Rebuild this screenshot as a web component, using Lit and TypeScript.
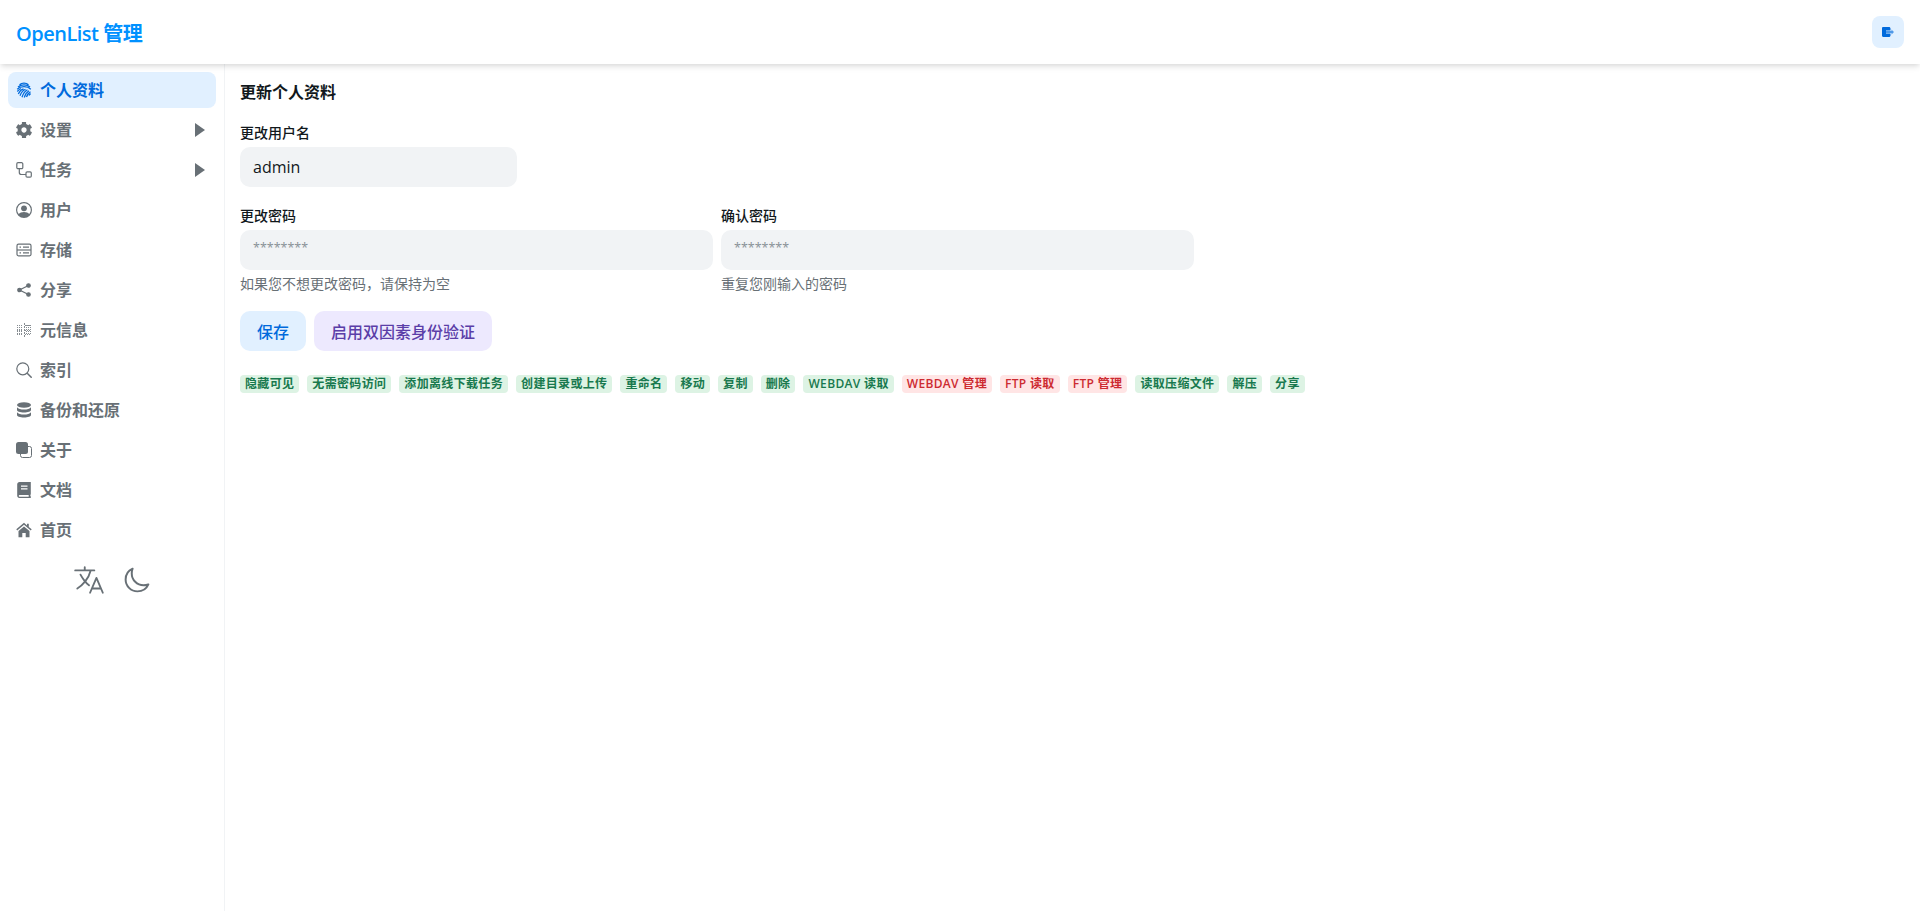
import { LitElement, html, css, svg } from "lit";
import { customElement } from "lit/decorators.js";

const icons: Record<string, unknown> = {
  finger: svg`<svg viewBox="0 0 16 16" fill="none" stroke="#006adc" stroke-width="1.250"><path d="M3.500 2.800C6 .6 10 .6 12.500 2.800M2 5C5 2.300 11 2.300 14 5M1.200 7.200C4.500 3.800 11.500 3.800 14.800 7.200"/><path d="M1.300 9.500C2.500 8 3.500 7 5 6.500M2.300 12C3.500 9.500 5 7.500 7.500 6.800M4 13.800C5 11 6.500 8.500 9.500 7.200M6 15.200C7 12 8.500 9.500 11.500 7.800M8.300 15.500C9 12.500 10.500 10.300 13 8.700M10.500 15C11 13 12.200 11.200 14.500 9.800M13 13.500C13.300 12.700 13.800 12.100 14.600 11.600"/></svg>`,
  gear: svg`<svg viewBox="17 14 478 484" fill="currentColor"><path d="M487.400 315.700l-42.600-24.600c4.300-23.200 4.300-47 0-70.200l42.600-24.600c4.900-2.800 7.100-8.600 5.500-14-11.100-35.600-30-67.800-54.700-94.600-3.800-4.100-10-5.100-14.800-2.300L380.800 110c-17.900-15.400-38.500-27.300-60.800-35.100V25.800c0-5.600-3.900-10.500-9.400-11.700-36.700-8.200-74.300-7.800-109.200 0-5.500 1.200-9.400 6.100-9.400 11.700V75c-22.200 7.900-42.800 19.800-60.800 35.100L88.700 85.500c-4.900-2.800-11-1.900-14.800 2.300-24.700 26.700-43.600 58.900-54.700 94.600-1.700 5.400.6 11.200 5.500 14L67.300 221c-4.300 23.200-4.300 47 0 70.200l-42.600 24.600c-4.900 2.800-7.100 8.600-5.500 14 11.100 35.600 30 67.800 54.700 94.600 3.800 4.100 10 5.100 14.800 2.300l42.600-24.600c17.900 15.400 38.500 27.300 60.800 35.100v49.200c0 5.600 3.900 10.500 9.400 11.700 36.700 8.200 74.300 7.800 109.200 0 5.500-1.200 9.400-6.100 9.400-11.700v-49.200c22.200-7.900 42.800-19.800 60.800-35.100l42.600 24.600c4.900 2.800 11 1.900 14.800-2.300 24.700-26.700 43.600-58.900 54.700-94.600 1.500-5.500-.7-11.300-5.600-14.100zM256 336c-44.100 0-80-35.900-80-80s35.900-80 80-80 80 35.900 80 80-35.900 80-80 80z"/></svg>`,
  route: svg`<svg viewBox="0 0 16 16" fill="none" stroke="currentColor" stroke-width="1.200"><rect x=".8" y=".7" width="6" height="6" rx="1.200"/><rect x="10" y="9.800" width="5.300" height="5.300" rx="1.200"/><path d="M3.300 6.700V10.500C3.300 12 4.300 12.500 5.500 12.500H10"/></svg>`,
  user: svg`<svg viewBox="0 0 16 16" fill="currentColor"><path fill-rule="evenodd" d="M8 0a8 8 0 1 0 0 16A8 8 0 0 0 8 0zm0 1.300a6.700 6.700 0 0 1 5.300 10.800C12.300 10.800 10.300 10 8 10s-4.300.8-5.300 2.100A6.700 6.700 0 0 1 8 1.300z"/><circle cx="8" cy="6.300" r="2.900"/></svg>`,
  storage: svg`<svg viewBox="0 0 16 16" fill="none" stroke="currentColor" stroke-width="1.200"><rect x="1" y="2.200" width="14" height="11.600" rx="1.500"/><path d="M1 8H15"/><path d="M3.500 5.200H5M3.500 10.900H5M7 5.200H13M7 10.900H13"/></svg>`,
  share: svg`<svg viewBox="0 0 16 16" fill="currentColor" stroke="currentColor" stroke-width="1.300"><circle cx="12.500" cy="3.500" r="1.700"/><circle cx="12.500" cy="12.500" r="1.700"/><circle cx="3.500" cy="8" r="1.700"/><path d="M12.500 3.500L3.500 8L12.500 12.500" fill="none"/></svg>`,
  meta: svg`<svg viewBox="0 0 16 16" fill="none" stroke="currentColor" stroke-width="1" opacity=".8" shape-rendering="crispEdges"><path stroke-dasharray="2 1" d="M8 .5V15.500"/><path stroke-dasharray="1 1" d="M1.500 3V13M3.500 3V13M5.500 3V13M10.500 3V13M12.500 3V13M14.500 3V13M1 3.500H7M9 3.500H15M1 8H7M9 8H15M1 12.500H7M9 12.500H15"/></svg>`,
  search: svg`<svg viewBox="0 0 16 16" fill="none" stroke="currentColor" stroke-width="1.200"><circle cx="6.800" cy="6.800" r="6"/><path d="M11.200 11.200L15.700 15.700" stroke-width="1.500"/></svg>`,
  db: svg`<svg viewBox="0 0 16 16" fill="currentColor"><ellipse cx="8" cy="3" rx="7" ry="2.800"/><path d="M1 5.200C2 7 5 7.500 8 7.500S14 7 15 5.200V8C15 9.500 12 10.500 8 10.500S1 9.500 1 8z"/><path d="M1 10.200C2 12 5 12.500 8 12.500S14 12 15 10.200V13C15 14.500 12 15.500 8 15.500S1 14.500 1 13z"/></svg>`,
  about: svg`<svg viewBox="0 0 16 16"><rect x="4.500" y="4.500" width="11" height="11" rx="2" fill="none" stroke="currentColor" stroke-width="1"/><rect x="0" y="0" width="12" height="12" rx="2.500" fill="currentColor"/></svg>`,
  book: svg`<svg viewBox="0 0 16 16" fill="currentColor"><path fill-rule="evenodd" d="M3.500 0H14.800V12.200C14.200 12.600 14.200 14 14.800 14.500V16H3.500C2 16 1.200 15 1.200 13.800V2.300C1.200 1 2.200 0 3.500 0zM5 3.500V4.800H11.500V3.500zM5 6.300V7.500H11.500V6.300zM3.500 13C2.500 13 2.500 14.800 3.500 14.800H12.800C12.500 14.200 12.500 13.600 12.800 13z"/></svg>`,
  home: svg`<svg viewBox="0 0 16 16" fill="currentColor"><path d="M8 4.500L2.500 9V15.200H6.300V11H9.700V15.200H13.500V9z"/><path d="M8 .8L.3 7.300 1.200 8.400 8 2.800 14.800 8.400 15.700 7.300 12.800 4.900V1.800H11V3.400z"/></svg>`,
  translate: svg`<svg viewBox="0 0 512 512" fill="none" stroke="currentColor" stroke-linecap="round" stroke-linejoin="round" stroke-width="28"><path d="M48 112h288M192 64v48M272 448l96-224 96 224M301.500 384h133M281.300 112S257 206 199 277 80 384 80 384"/><path d="M256 336s-35-27-72-75-56-85-56-85"/></svg>`,
  moon: svg`<svg viewBox="0 0 512 512" fill="none" stroke="currentColor" stroke-linecap="round" stroke-linejoin="round" stroke-width="36"><path d="M160 136c0-30.620 4.510-61.610 16-88C99.570 81.270 48 159.320 48 248c0 119.290 96.710 216 216 216 88.680 0 166.730-51.570 200-128-26.390 11.490-57.380 16-88 16-119.290 0-216-96.710-216-216z"/></svg>`,
  logout: svg`<svg viewBox="0 0 12 10"><path d="M0 1.200C0 .5.500 0 1.200 0H7C7.800 0 8.500.7 8.500 1.500V3.500H4V6.500H8.500V8.500C8.500 9.300 7.800 10 7 10H1.200C.5 10 0 9.500 0 8.800z" fill="currentColor"/><path d="M4 4H9.500V2.500L12 5L9.500 7.500V6H4z" fill="currentColor" opacity=".65"/></svg>`,
};

const menu: Array<[string, string, boolean?, boolean?]> = [
  ["finger", "个人资料", false, true],
  ["gear", "设置", true],
  ["route", "任务", true],
  ["user", "用户"],
  ["storage", "存储"],
  ["share", "分享"],
  ["meta", "元信息"],
  ["search", "索引"],
  ["db", "备份和还原"],
  ["about", "关于"],
  ["book", "文档"],
  ["home", "首页"],
];

const tags: Array<[string, boolean?]> = [
  ["隐藏可见"],
  ["无需密码访问"],
  ["添加离线下载任务"],
  ["创建目录或上传"],
  ["重命名"],
  ["移动"],
  ["复制"],
  ["删除"],
  ["WEBDAV 读取"],
  ["WEBDAV 管理", true],
  ["FTP 读取", true],
  ["FTP 管理", true],
  ["读取压缩文件"],
  ["解压"],
  ["分享"],
];

@customElement("app-root")
export class AppRoot extends LitElement {
  static styles = css`
    :host {
      display: block;
      height: 911px;
      overflow: hidden;
      background: #fff;
      font-family: "Open Sans", "Noto Sans CJK SC", sans-serif;
      color: #11181c;
    }
    svg { display: block; width: 100%; height: 100%; }
    header {
      height: 64px;
      display: flex;
      align-items: center;
      justify-content: space-between;
      padding: 0 16px;
      box-shadow: 0 4px 6px -1px rgba(0, 0, 0, 0.1), 0 2px 4px -1px rgba(0, 0, 0, 0.06);
      position: relative;
      z-index: 1;
      background: #fff;
    }
    .brand { font-size: 20px; font-weight: 600; color: #0091ff; letter-spacing: -0.5px; }
    .logout {
      width: 32px;
      height: 32px;
      border-radius: 8px;
      background: #e1f0ff;
      color: #006adc;
      display: flex;
      align-items: center;
      justify-content: center;
    }
    .logout span { width: 12px; height: 10px; }
    .body { display: flex; height: 847px; }
    aside {
      width: 224px;
      flex: none;
      box-sizing: border-box;
      box-shadow: 1px 0 0 #f1f3f5;
      padding: 8px;
      display: flex;
      flex-direction: column;
      gap: 4px;
    }
    .item {
      height: 36px;
      flex: none;
      box-sizing: border-box;
      padding: 0 8px;
      border-radius: 8px;
      display: flex;
      align-items: center;
      gap: 8px;
      font-size: 16px;
      font-weight: 600;
      color: #687076;
    }
    .item.active { background: #e1f0ff; color: #006adc; }
    .ic { width: 16px; height: 16px; flex: none; }
    .label { flex: 1; padding-bottom: 2px; }
    .caret {
      width: 0;
      height: 0;
      border-left: 10px solid #687076;
      border-top: 7px solid transparent;
      border-bottom: 7px solid transparent;
      margin-right: 3px;
    }
    .tools {
      display: flex;
      justify-content: center;
      align-items: center;
      gap: 17px;
      padding-top: 11px;
      margin-right: 2px;
      color: #687076;
    }
    .tools .tr { width: 34px; height: 34px; }
    .tools .mo { width: 28px; height: 28px; }
    main { flex: 1; padding: 16px; box-sizing: border-box; min-width: 0; }
    h1 { margin: 0; font-size: 16px; font-weight: 600; line-height: 24px; height: 24px; }
    .lab { display: block; font-size: 14px; font-weight: 500; line-height: 20px; margin-bottom: 4px; }
    .field { background: #f1f3f5; border-radius: 10px; height: 40px; box-sizing: border-box; padding: 0 13px; display: flex; align-items: center; font-size: 16px; }
    .name { width: 277px; }
    .ph { color: #889096; font-size: 12.5px; margin-bottom: 5px; }
    .row { display: flex; gap: 8px; width: 954px; margin-top: 19px; }
    .col { flex: 1; min-width: 0; }
    .hint { font-size: 14px; color: #687076; line-height: 20px; margin-top: 4px; }
    .first { margin-top: 19px; }
    .buttons { display: flex; gap: 8px; margin-top: 17px; }
    .btn { height: 40px; border-radius: 10px; display: flex; align-items: center; justify-content: center; padding: 0 17px; font-size: 16px; font-weight: 500; }
    .btn.blue { background: #e1f0ff; color: #006adc; }
    .btn.purple { background: #ede9fe; color: #5b3ea8; }
    .tags { display: flex; gap: 8px; margin-top: 24px; }
    .tag { height: 18px; border-radius: 4px; padding: 0 5px; font-size: 12px; font-weight: 600; letter-spacing: 0.335px; line-height: 18px; background: #ddf3e4; color: #18794e; white-space: nowrap; }
    .tag.red { background: #ffe5e5; color: #cd2b31; }
  `;

  render() {
    return html`
      <header>
        <div class="brand">OpenList 管理</div>
        <div class="logout"><span>${icons.logout}</span></div>
      </header>
      <div class="body">
        <aside>
          ${menu.map(
            ([icon, label, caret, active]) => html`
              <div class="item ${active ? "active" : ""}">
                <span class="ic">${icons[icon]}</span>
                <span class="label">${label}</span>
                ${caret ? html`<span class="caret"></span>` : null}
              </div>
            `
          )}
          <div class="tools">
            <span class="tr">${icons.translate}</span>
            <span class="mo">${icons.moon}</span>
          </div>
        </aside>
        <main>
          <h1>更新个人资料</h1>
          <div class="first">
            <label class="lab">更改用户名</label>
            <div class="field name">admin</div>
          </div>
          <div class="row">
            <div class="col">
              <label class="lab">更改密码</label>
              <div class="field"><span class="ph">********</span></div>
              <div class="hint">如果您不想更改密码，请保持为空</div>
            </div>
            <div class="col">
              <label class="lab">确认密码</label>
              <div class="field"><span class="ph">********</span></div>
              <div class="hint">重复您刚输入的密码</div>
            </div>
          </div>
          <div class="buttons">
            <div class="btn blue">保存</div>
            <div class="btn purple">启用双因素身份验证</div>
          </div>
          <div class="tags">
            ${tags.map(([t, red]) => html`<span class="tag ${red ? "red" : ""}">${t}</span>`)}
          </div>
        </main>
      </div>
    `;
  }
}
